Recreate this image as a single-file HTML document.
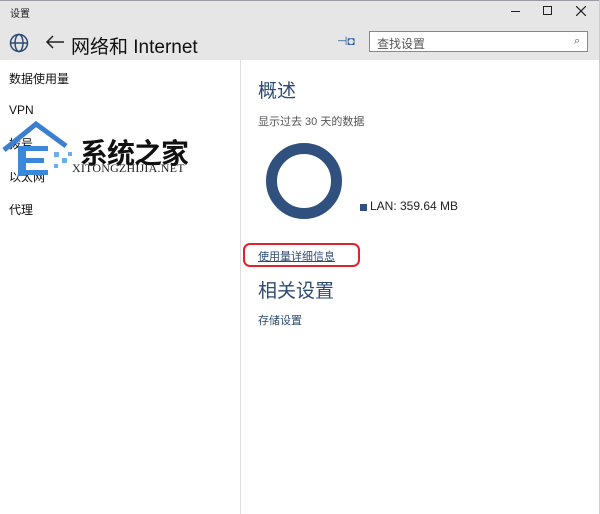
<!DOCTYPE html>
<html><head><meta charset="utf-8"><style>
body{margin:0;width:600px;height:514px;overflow:hidden;background:#fff;font-family:"Liberation Sans","Noto Sans CJK SC",sans-serif;position:relative}
.a{position:absolute;white-space:nowrap}
</style></head><body>
<div class="a" style="left:0;top:0;width:600px;height:60px;background:#e6e6e6;border-top:1px solid #9a9aa6;box-sizing:border-box"></div>
<div class="a" style="left:10px;top:5px;font-size:10px;color:#222">设置</div>
<svg class="a" style="left:576px;top:6px" width="10" height="10" viewBox="0 0 10 10" stroke="#222" stroke-width="1.2"><path d="M0 0L10 10M10 0L0 10"/></svg>
<div class="a" style="left:543px;top:6px;width:9px;height:9px;border:1px solid #222;box-sizing:border-box"></div>
<div class="a" style="left:511px;top:11px;width:9px;height:1px;background:#222"></div>
<svg class="a" style="left:9px;top:33px" width="20" height="20" viewBox="0 0 20 20" fill="none" stroke="#2d4a74" stroke-width="1.5"><circle cx="10" cy="10" r="8.5"/><ellipse cx="10" cy="10" rx="4" ry="8.5"/><line x1="1.5" y1="10" x2="18.5" y2="10"/></svg>
<svg class="a" style="left:45px;top:35px" width="20" height="14" viewBox="0 0 20 14" fill="none" stroke="#222" stroke-width="1.5"><path d="M19 7H2M8 1L2 7l6 6"/></svg>
<div class="a" style="left:71px;top:32px;font-size:19px;color:#111">网络和 Internet</div>
<div class="a" style="left:337px;top:34px;font-size:12px;color:#2d5da0">⊣◘</div>
<div class="a" style="left:369px;top:31px;width:219px;height:21px;border:1px solid #888;background:#fff;box-sizing:border-box"></div>
<div class="a" style="left:377px;top:35px;font-size:12px;color:#555">查找设置</div>
<div class="a" style="left:574px;top:35px;font-size:11px;color:#555">⌕</div>
<div class="a" style="left:240px;top:60px;width:1px;height:454px;background:#ddd"></div>
<div class="a" style="left:599px;top:0;width:1px;height:514px;background:#ccc"></div>
<div class="a" style="left:9px;top:70px;font-size:12px;color:#111">数据使用量</div>
<div class="a" style="left:9px;top:103px;font-size:12px;color:#111">VPN</div>
<div class="a" style="left:9px;top:135px;font-size:12px;color:#111">拨号</div>
<div class="a" style="left:9px;top:168px;font-size:12px;color:#111">以太网</div>
<div class="a" style="left:9px;top:201px;font-size:12px;color:#111">代理</div>
<svg class="a" style="left:2px;top:120px" width="76" height="62" viewBox="0 0 76 62"><path d="M2 30L34 4l30 22" fill="none" stroke="#3b7fd0" stroke-width="5"/><rect x="16" y="26" width="8" height="30" fill="#3b88db"/><rect x="24" y="26" width="22" height="5" fill="#3b88db"/><rect x="24" y="38" width="18" height="5" fill="#3b88db"/><rect x="24" y="50" width="22" height="5" fill="#3b88db"/><rect x="52" y="32" width="5" height="5" fill="#6aaeea"/><rect x="60" y="38" width="5" height="5" fill="#6aaeea"/><rect x="52" y="44" width="4" height="4" fill="#6aaeea"/><rect x="66" y="32" width="4" height="4" fill="#6aaeea"/></svg>
<div class="a" style="left:80px;top:132px;font-size:28px;font-weight:bold;color:#111;font-family:'Noto Sans CJK SC',sans-serif;letter-spacing:-1px">系统之家</div>
<div class="a" style="left:72px;top:161px;font-size:12px;color:#222;font-family:'Liberation Serif',serif;letter-spacing:.2px">XITONGZHIJIA.NET</div>
<div class="a" style="left:258px;top:76px;font-size:19px;color:#2d4a74">概述</div>
<div class="a" style="left:258px;top:113px;font-size:11px;color:#555">显示过去 30 天的数据</div>
<div class="a" style="left:266px;top:143px;width:76px;height:76px;border-radius:50%;border:11px solid #30507d;box-sizing:border-box"></div>
<div class="a" style="left:360px;top:204px;width:7px;height:7px;background:#30507d"></div>
<div class="a" style="left:370px;top:199px;font-size:12px;color:#222">LAN: 359.64 MB</div>
<div class="a" style="left:243px;top:243px;width:117px;height:24px;border:2px solid #e0232b;border-radius:7px;box-sizing:border-box"></div>
<div class="a" style="left:258px;top:248px;font-size:11px;color:#2d4a74;text-decoration:underline">使用量详细信息</div>
<div class="a" style="left:258px;top:276px;font-size:19px;color:#2d4a74">相关设置</div>
<div class="a" style="left:258px;top:312px;font-size:11px;color:#2d4a74">存储设置</div>
</body></html>
